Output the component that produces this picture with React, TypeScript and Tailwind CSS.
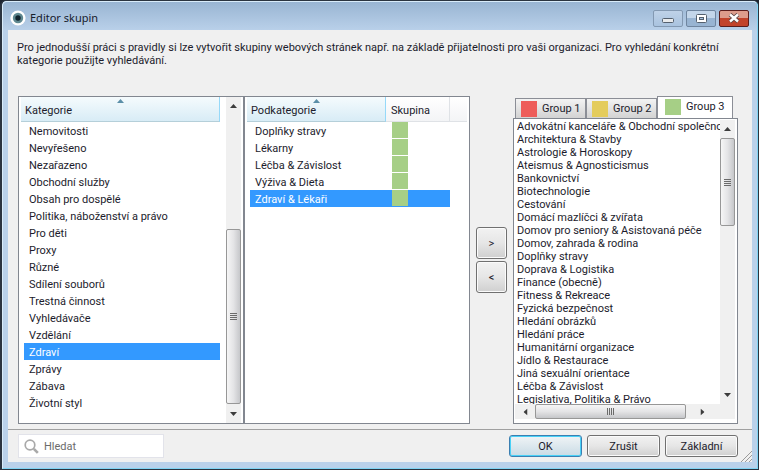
import React, { useState } from 'react';
import clsx from 'clsx';

const CATEGORIES = [
    'Nemovitosti',
    'Nevyřešeno',
    'Nezařazeno',
    'Obchodní služby',
    'Obsah pro dospělé',
    'Politika, náboženství a právo',
    'Pro děti',
    'Proxy',
    'Různé',
    'Sdílení souborů',
    'Trestná činnost',
    'Vyhledávače',
    'Vzdělání',
    'Zdraví',
    'Zprávy',
    'Zábava',
    'Životní styl',
];

const SUBCATEGORIES = ['Doplňky stravy', 'Lékarny', 'Léčba & Závislost', 'Výživa & Dieta', 'Zdraví & Lékaři'];

const GROUPS = [
    { name: 'Group 1', color: 'bg-[#ee5d5a]' },
    { name: 'Group 2', color: 'bg-[#e4cc5c]' },
    { name: 'Group 3', color: 'bg-[#a6cf86]' },
];

const GROUP_ITEMS = [
    'Advokátní kanceláře & Obchodní společno',
    'Architektura & Stavby',
    'Astrologie & Horoskopy',
    'Ateismus & Agnosticismus',
    'Bankovnictví',
    'Biotechnologie',
    'Cestování',
    'Domácí mazlíčci & zvířata',
    'Domov pro seniory & Asistovaná péče',
    'Domov, zahrada & rodina',
    'Doplňky stravy',
    'Doprava & Logistika',
    'Finance (obecně)',
    'Fitness & Rekreace',
    'Fyzická bezpečnost',
    'Hledání obrázků',
    'Hledání práce',
    'Humanitární organizace',
    'Jídlo & Restaurace',
    'Jiná sexuální orientace',
    'Léčba & Závislost',
    'Legislativa, Politika & Právo',
];

const Arrow = ({ className }: { className?: string }) => (
    <svg viewBox="0 0 7 4" className={clsx('h-1 w-[7px]', className)}>
        <path d="M3.5 0 7 4H0z" fill="#3c3c3c" />
    </svg>
);

const SortMark = () => (
    <svg viewBox="0 0 7 4" className="absolute top-[2px] left-1/2 h-1 w-[7px] -translate-x-[3px]">
        <path d="M3.5 0 7 4H0z" fill="#5b8fa8" />
    </svg>
);

// thumb holds the full class string for the track padding and the thumb size
const VerticalScrollbar = ({ before, thumb }: { before: string; thumb: string }) => (
    <div className="flex w-[15px] shrink-0 flex-col items-center bg-[#f0f0f0]">
        <div className="flex h-[18px] w-full shrink-0 items-center justify-center">
            <Arrow />
        </div>
        <div className={before} />
        <div
            className={clsx(
                'flex w-full flex-col items-center justify-center gap-px rounded-[2px] border border-[#979797] bg-linear-to-r from-[#f6f6f6] via-[#e4e4e6] to-[#c6c7ca]',
                thumb
            )}
        >
            {[0, 1, 2, 3].map(i => (
                <span key={i} className="h-px w-[7px] bg-[#6b6b6b]" />
            ))}
        </div>
        <div className="flex-1" />
        <div className="flex h-[18px] w-full shrink-0 items-center justify-center">
            <Arrow className="rotate-180" />
        </div>
    </div>
);

const sortedHead =
    'relative h-[25px] border-r border-b border-[#96d9f9] border-b-[#b5cfd9] bg-linear-to-b from-[#f5fbfd] to-[#d8ecf6] pl-1 pt-[3px] text-left font-normal';

const rowLabel = 'h-[17px] pt-[2px] pl-[5px] leading-[15px]';

const pushButton =
    'rounded-[3px] border border-[#707070] bg-linear-to-b from-[#f2f2f2] via-[#e6e6e6] to-[#cfcfcf] shadow-[inset_0_0_0_1px_#fbfbfb] text-center';

const TitleBar = () => (
    <header className="flex h-7 shrink-0 items-center pl-[2px] pr-[3px]">
        <svg viewBox="0 0 16 16" className="mt-1 h-4 w-4">
            <circle cx="8" cy="8" r="7.6" fill="#fff" />
            <circle cx="8" cy="8" r="5.2" fill="#5f8890" />
            <circle cx="8" cy="8" r="2.7" fill="#10222c" />
        </svg>
        <h1 className="mt-1 flex-1 pl-1 font-['Noto_Sans','Open_Sans',sans-serif] text-[11px] leading-4 text-[#16202c]">
            Editor skupin
        </h1>
        <div className="flex gap-[3px] pt-1">
            <button type="button" aria-label="Minimize" className="flex h-[17px] w-[30px] items-center justify-center rounded-[2px] border border-[#8399b2] bg-linear-to-b from-[#bfd2e8] to-[#a9c3df] pt-1">
                <svg viewBox="0 0 12 5" className="h-[5px] w-3">
                    <rect x="0.5" y="0.5" width="11" height="4" rx="1" fill="#e8eaec" stroke="#54606e" />
                </svg>
            </button>
            <button type="button" aria-label="Maximize" className="flex h-[17px] w-[30px] items-center justify-center rounded-[2px] border border-[#6f859f] bg-linear-to-b from-[#c3d6ea] from-50% to-[#98b4d2] to-50%">
                <svg viewBox="0 0 11 9" className="h-[9px] w-[11px]">
                    <rect x="0.5" y="0.5" width="10" height="8" rx="1" fill="#fff" stroke="#54606e" />
                    <rect x="3.5" y="3.5" width="4" height="2" fill="#a9c3df" stroke="#54606e" />
                </svg>
            </button>
            <button type="button" aria-label="Close" className="flex h-[17px] w-[30px] items-center justify-center rounded-[2px] border border-[#5a1d1c] bg-linear-to-b from-[#dd9c8c] from-50% to-[#c1432b] to-50%">
                <svg viewBox="0 0 12 10" className="h-[10px] w-3">
                    <path d="M2 1.5 10 8.5M10 1.5 2 8.5" stroke="#5a4444" strokeWidth="4.2" />
                    <path d="M2 1.5 10 8.5M10 1.5 2 8.5" stroke="#fff" strokeWidth="2.4" />
                </svg>
            </button>
        </div>
    </header>
);

const CategoryPanel = () => {
    const [selected, setSelected] = useState('Zdraví');

    return (
        <section className="flex border border-[#828790] bg-white px-[2px]">
            <div className="min-w-0 flex-1 pr-[6px]">
                <table className="w-full border-separate border-spacing-0">
                    <thead>
                        <tr>
                            <th className={sortedHead}>
                                Kategorie
                                <SortMark />
                            </th>
                        </tr>
                    </thead>
                    <tbody>
                        {CATEGORIES.map(name => (
                            <tr key={name} onClick={() => setSelected(name)}>
                                <td className="p-0 pl-[3px]">
                                    <div className={clsx(rowLabel, name === selected && 'bg-[#3399ff] text-white')}>
                                        {name}
                                    </div>
                                </td>
                            </tr>
                        ))}
                    </tbody>
                </table>
            </div>
            <VerticalScrollbar before="flex-[115]" thumb="flex-[174]" />
        </section>
    );
};

const SubcategoryPanel = () => {
    const [selected, setSelected] = useState('Zdraví & Lékaři');

    return (
        <section className="border border-[#828790] bg-white px-[2px]">
            <table className="w-full border-separate border-spacing-0">
                <thead>
                    <tr>
                        <th className={sortedHead}>
                            Podkategorie
                            <SortMark />
                        </th>
                        <th className="w-16 border-r border-b border-[#dfe2e6] bg-linear-to-b from-white to-[#f3f4f6] pl-[5px] pt-[3px] text-left font-normal">
                            Skupina
                        </th>
                        <th className="w-[17px] border-b border-[#dfe2e6] bg-linear-to-b from-white to-[#f3f4f6]" aria-label="Volný sloupec" />
                    </tr>
                </thead>
                <tbody>
                    {SUBCATEGORIES.map(name => (
                        <tr key={name} onClick={() => setSelected(name)}>
                            <td className="p-0 pl-[3px]">
                                <div className={clsx(rowLabel, name === selected && 'bg-[#3399ff] text-white')}>
                                    {name}
                                </div>
                            </td>
                            <td className="p-0">
                                <div className={clsx('h-[17px] pl-[6px]', name === selected && 'bg-[#3399ff]')}>
                                    <div className="h-4 w-4 bg-[#a6cf86]" />
                                </div>
                            </td>
                            <td className="p-0" />
                        </tr>
                    ))}
                </tbody>
            </table>
        </section>
    );
};

const GroupPanel = () => {
    const [active, setActive] = useState('Group 3');

    return (
        <section className="flex min-h-0 flex-col">
            <div role="tablist" className="flex h-[22px] shrink-0 items-end pl-[2px]">
                {GROUPS.map(group => {
                    const isActive = group.name === active;
                    return (
                        <button
                            key={group.name}
                            type="button"
                            role="tab"
                            aria-selected={isActive}
                            onClick={() => setActive(group.name)}
                            className={clsx(
                                'flex items-center gap-[5px] border border-b-0 border-[#8b8e96] pl-[5px]',
                                isActive ? 'h-[22px] w-[76px] bg-white pb-[2px] pl-[7px]' : 'h-5 w-[71px] bg-linear-to-b from-[#f3f3f3] to-[#d3d3d3]'
                            )}
                        >
                            <span className={clsx('h-4 w-4', group.color)} />
                            {group.name}
                        </button>
                    );
                })}
            </div>
            <div className="flex min-h-0 flex-1 flex-col border border-[#828790] bg-white p-px pb-1 pr-[2px]">
                <div className="flex min-h-0 flex-1">
                    <ul className="h-0 min-h-full min-w-0 flex-1 overflow-hidden pl-[2px]">
                        {GROUP_ITEMS.map(item => (
                            <li key={item} className="h-[13px] whitespace-nowrap leading-[13px]">
                                {item}
                            </li>
                        ))}
                    </ul>
                    <VerticalScrollbar before="" thumb="h-[88px]" />
                </div>
                <div className="flex h-[15px] shrink-0 bg-[#f0f0f0] pr-[17px]">
                    <div className="flex w-5 items-center justify-center">
                        <Arrow className="-rotate-90" />
                    </div>
                    <div className="flex flex-1 items-center justify-center gap-px rounded-[2px] border border-[#979797] bg-linear-to-b from-[#f6f6f6] via-[#e4e4e6] to-[#c6c7ca]">
                        {[0, 1, 2, 3].map(i => (
                            <span key={i} className="h-[7px] w-px bg-[#6b6b6b]" />
                        ))}
                    </div>
                    <div className="flex w-8 items-center justify-center">
                        <Arrow className="rotate-90" />
                    </div>
                </div>
            </div>
        </section>
    );
};

const App = () => {
    return (
        <div className="bg-[#1d2430]">
            <div className="flex min-h-screen flex-col rounded-t-md border-t border-r border-b border-l-2 border-[#2b3440] bg-linear-to-b from-[#98b4d2] to-[#bad1ea] to-[30px] font-['Roboto','Liberation_Sans',sans-serif] text-[11px] leading-[13px] text-[#1c1c2c]">
                <div className="flex flex-1 flex-col rounded-t-[5px] border border-[#d9ecfa] border-r-[#7fd4f4] border-b-[#7fd4f4] px-[5px] pb-[6px]">
                    <TitleBar />
                    <main className="relative flex flex-1 flex-col bg-[#f0f0f0]">
                        <p className="px-[9px] pt-[11px]">
                            Pro jednodušší práci s pravidly si lze vytvořit skupiny webových stránek např. na základě přijatelnosti pro vaši organizaci. Pro vyhledání konkrétní kategorie použijte vyhledávání.
                        </p>
                        <div className="mt-[29px] grid flex-1 grid-cols-[1fr_1fr_auto_225px] pl-[10px] pr-[14px]">
                            <CategoryPanel />
                            <SubcategoryPanel />
                            <div className="flex flex-col justify-center gap-[2px] px-[6px]">
                                <button type="button" className={clsx(pushButton, 'h-8 w-[31px]')}>&gt;</button>
                                <button type="button" className={clsx(pushButton, 'h-8 w-[31px]')}>&lt;</button>
                            </div>
                            <GroupPanel />
                        </div>
                        <footer className="mt-[5px] flex items-center gap-[5px] border-t border-[#a0a0a0] py-1 pl-[10px] pr-[14px]">
                            <label className="mr-auto flex h-6 w-[146px] items-center gap-[5px] border border-[#e2e3ea] bg-white pl-[5px]">
                                <svg viewBox="0 0 15 15" className="h-[15px] w-[15px] shrink-0" fill="none" stroke="#a9a9a9">
                                    <circle cx="6" cy="6" r="4.8" strokeWidth="1.7" />
                                    <path d="m9.8 9.8 4 4" strokeWidth="2.6" />
                                </svg>
                                <input type="text" placeholder="Hledat" aria-label="Hledat" className="w-full min-w-0 outline-none placeholder:text-[#6b6b6b]" />
                            </label>
                            <button type="button" className="h-[22px] w-[73px] rounded-[3px] border border-[#3c7fb1] bg-linear-to-b from-[#f0f4f6] to-[#c9dbe5] shadow-[inset_0_0_0_1px_#48d1f7]">
                                OK
                            </button>
                            <button type="button" className={clsx(pushButton, 'h-[22px] w-[73px]')}>Zrušit</button>
                            <button type="button" className={clsx(pushButton, 'h-[22px] w-[73px]')}>Základní</button>
                        </footer>
                        <svg viewBox="0 0 12 12" className="absolute right-0 bottom-0 h-3 w-3" stroke="#9a9a9a">
                            <path d="M1 12 12 1M5 12l7-7M9 12l3-3" />
                        </svg>
                    </main>
                </div>
            </div>
        </div>
    );
};

export default App;
